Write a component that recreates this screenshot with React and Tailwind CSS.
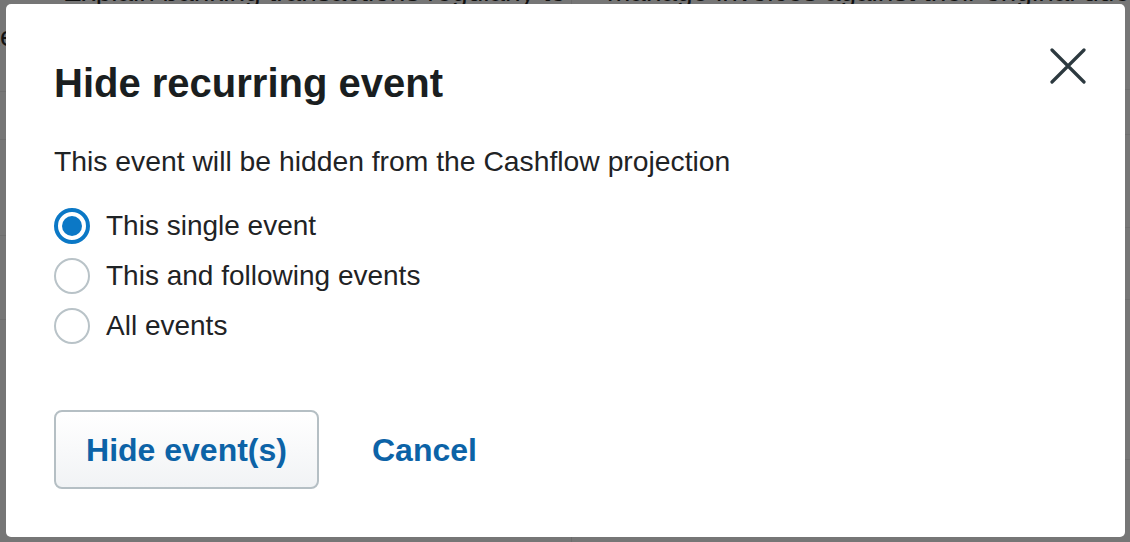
import React from "react";

function Radio({ checked, label }) {
  return (
    <label className="flex items-center h-[50px] gap-[16px] cursor-pointer">
      {checked ? (
        <span className="w-[36px] h-[36px] rounded-full border-[4px] border-[#0b78c6] bg-white flex items-center justify-center shadow-[inset_0_0_0_1px_#ffffff]">
          <span className="w-[20px] h-[20px] rounded-full bg-[#0b78c6]" />
        </span>
      ) : (
        <span className="w-[36px] h-[36px] rounded-full border-[2px] border-[#b9c3c8] bg-white" />
      )}
      <span className="text-[28px] leading-[40px] text-[#1f2325]">{label}</span>
    </label>
  );
}

export default function App() {
  return (
    <div className="relative w-[1130px] h-[542px] overflow-hidden bg-[#767676] font-['Liberation_Sans',Arial,sans-serif]">
      {/* page behind the overlay */}
      <div className="flex h-full">
        <div className="w-[572px] border-r border-[#6c6c6c] flex flex-col">
          <div className="h-[92px] border-b border-[#6e6e6e]">
            <div className="mt-[-28px] pl-[63px] text-[28px] leading-[40px] text-[#111] whitespace-nowrap">
              Explain banking transactions regularly to
            </div>
            <div className="ml-[-14px] text-[28px] leading-[40px] text-[#111] whitespace-nowrap mt-[5px]">
              ke
            </div>
          </div>
          <div className="h-[48px] border-b border-[#6e6e6e]" />
          <div className="h-[96px] border-b border-[#6e6e6e]" />
          <div className="h-[84px] border-b border-[#6e6e6e]" />
        </div>
        <div className="flex-1 flex flex-col">
          <div className="h-[90px] border-b border-[#6e6e6e]">
            <div className="mt-[-28px] pl-[35px] text-[28px] leading-[40px] text-[#111] whitespace-nowrap">
              manage invoices against their original due
            </div>
          </div>
          <div className="h-[45px] border-b border-[#6e6e6e]" />
          <div className="h-[93px] border-b border-[#6e6e6e]" />
          <div className="h-[72px] border-b border-[#6e6e6e]" />
          <div className="h-[160px] border-b border-[#6e6e6e]" />
        </div>
      </div>

      {/* modal */}
      <div
        role="dialog"
        className="absolute left-[6px] top-[4px] w-[1119px] h-[533px] bg-white rounded-[5px] px-[48px] pt-[38px] pb-[48px] flex flex-col"
      >
        <div className="flex justify-between items-start">
          <h2 className="mt-[17px] text-[40px] leading-[48px] font-bold text-[#1a1e20]">
            Hide recurring event
          </h2>
          <button className="mt-[6px] mr-[-9px] w-[36px] h-[36px] flex items-center justify-center" aria-label="Close">
            <svg width="36" height="36" viewBox="0 0 36 36" fill="none">
              <path d="M2 2L34 34M34 2L2 34" stroke="#2c393f" strokeWidth="3.2" strokeLinecap="round" />
            </svg>
          </button>
        </div>

        <p className="mt-[34px] text-[28.3px] leading-[40px] text-[#1f2325]">
          This event will be hidden from the Cashflow projection
        </p>

        <div className="mt-[20px] flex flex-col">
          <Radio checked label="This single event" />
          <Radio label="This and following events" />
          <Radio label="All events" />
        </div>

        <div className="mt-[59px] flex items-center">
          <button className="w-[265px] h-[79px] rounded-[8px] border-[2px] border-[#b5bfc4] bg-gradient-to-b from-[#ffffff] to-[#f1f3f5] text-[32px] font-bold text-[#0c63a7]">
            Hide event(s)
          </button>
          <button className="ml-[53px] text-[32px] font-bold text-[#0c63a7]">
            Cancel
          </button>
        </div>
      </div>
    </div>
  );
}
